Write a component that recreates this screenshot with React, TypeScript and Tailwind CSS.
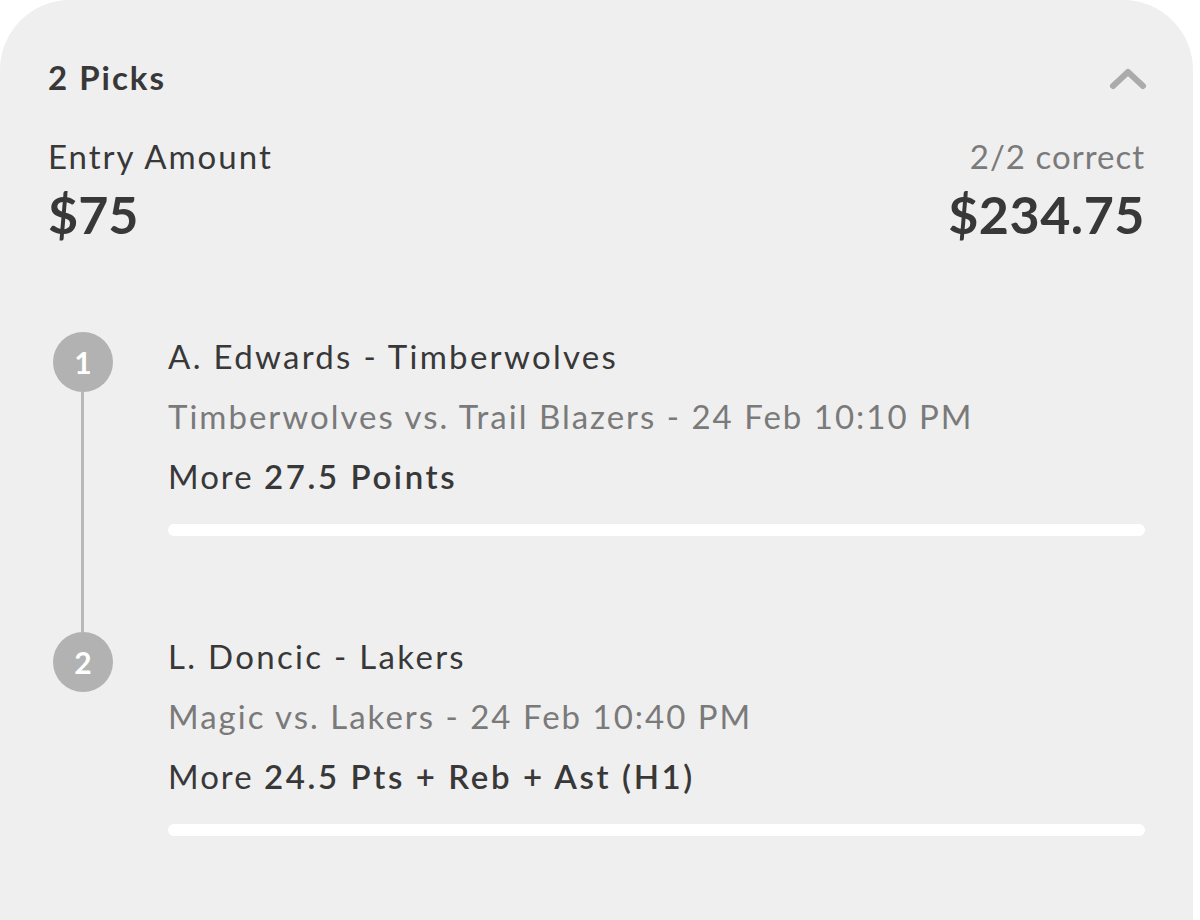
import React from "react";

type Pick = {
  n: number;
  player: string;
  game: string;
  line: string;
};

const picks: Pick[] = [
  {
    n: 1,
    player: "A. Edwards - Timberwolves",
    game: "Timberwolves vs. Trail Blazers - 24 Feb 10:10 PM",
    line: "27.5 Points",
  },
  {
    n: 2,
    player: "L. Doncic - Lakers",
    game: "Magic vs. Lakers - 24 Feb 10:40 PM",
    line: "24.5 Pts + Reb + Ast (H1)",
  },
];

function PickRow({ pick, last }: { pick: Pick; last: boolean }) {
  return (
    <div className={"flex " + (last ? "" : "pb-[96px]")}>
      <div className="relative w-[60px] shrink-0">
        <div className="w-[60px] h-[60px] rounded-full bg-[#b2b2b2] flex items-center justify-center text-white text-[30px] font-bold">
          {pick.n}
        </div>
        {!last && (
          <div className="absolute left-[28px] top-[60px] bottom-[-96px] w-[3px] bg-[#b8b8b8]" />
        )}
      </div>
      <div className="flex-1 ml-[55px] -mt-[6px] text-[33px] tracking-[2px]">
        <div className="h-[60px] leading-[60px] tracking-[2.3px] text-[#383838]">{pick.player}</div>
        <div className="h-[60px] leading-[60px] text-[#7a7a7a]">{pick.game}</div>
        <div className="h-[60px] leading-[60px] text-[#383838]">
          More <span className="font-semibold tracking-[2.6px]">{pick.line}</span>
        </div>
        <div className="mt-[18px] h-[12px] rounded-full bg-white" />
      </div>
    </div>
  );
}

export default function App() {
  return (
    <div
      className="w-[1200px] h-[920px] bg-white overflow-hidden"
      style={{ fontFamily: "Lato, 'Noto Sans', sans-serif" }}
    >
      <div className="w-[1193px] h-[920px] bg-[#efefef] rounded-t-[70px] px-12 pt-[58px]">
        <div className="flex items-center justify-between h-[40px]">
          <div className="text-[33px] font-bold tracking-[2px] text-[#383838]">2 Picks</div>
          <svg width="38" height="24" viewBox="0 0 38 24" className="mr-[-2px]">
            <polyline
              points="4,20 19,6 34,20"
              fill="none"
              stroke="#ababab"
              strokeWidth="6"
              strokeLinecap="round"
              strokeLinejoin="round"
            />
          </svg>
        </div>
        <div className="flex justify-between mt-[38px]">
          <div>
            <div className="text-[33px] leading-[40px] tracking-[2px] text-[#383838]">Entry Amount</div>
            <div className="text-[52px] leading-[76px] font-bold text-[#383838]">$75</div>
          </div>
          <div className="text-right">
            <div className="text-[33px] leading-[40px] tracking-[1px] text-[#7a7a7a]">2/2 correct</div>
            <div className="text-[52px] leading-[76px] font-bold tracking-[0.5px] text-[#383838]">$234.75</div>
          </div>
        </div>
        <div className="mt-[80px] pl-[5px]">
          {picks.map((p, i) => (
            <PickRow key={p.n} pick={p} last={i === picks.length - 1} />
          ))}
        </div>
      </div>
    </div>
  );
}
